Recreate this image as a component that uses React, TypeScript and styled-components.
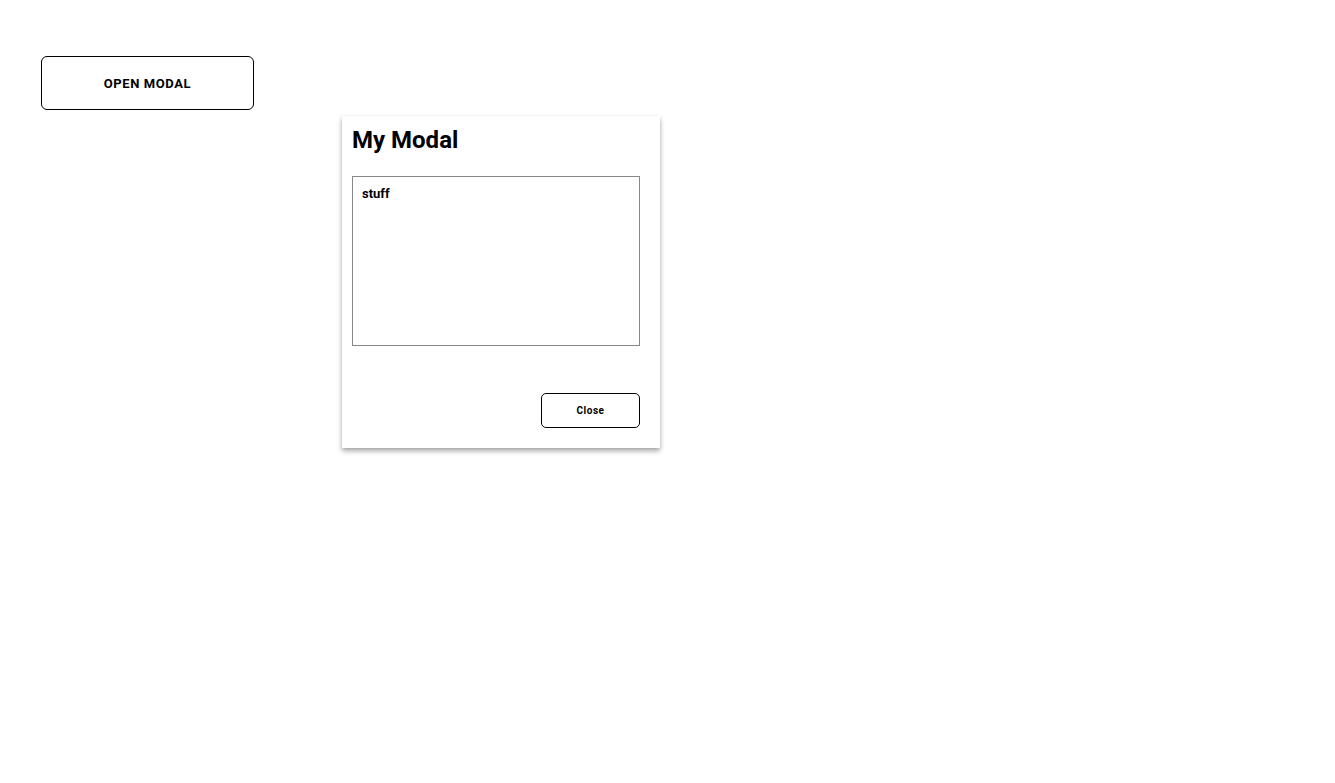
import React from "react";
import styled, { createGlobalStyle } from "styled-components";

const Global = createGlobalStyle`
  html, body { margin: 0; padding: 0; background: #ffffff; }
  body { font-family: Roboto, "Liberation Sans", sans-serif; color: #000; }
  * { box-sizing: border-box; }
`;

const Page = styled.div`
  position: relative;
  width: 1335px;
  height: 783px;
  padding: 56px 0 0 41px;
`;

const OpenButton = styled.button`
  display: flex;
  align-items: center;
  justify-content: center;
  width: 213px;
  height: 54px;
  background: #fff;
  border: 1px solid #000;
  border-radius: 6px;
  font-family: Roboto, "Liberation Sans", sans-serif;
  font-weight: 700;
  font-size: 13px;
  letter-spacing: 0.6px;
  color: #000;
  text-transform: uppercase;
  padding: 0;
  cursor: pointer;
`;

const Modal = styled.div`
  position: absolute;
  left: 342px;
  top: 116px;
  width: 318px;
  height: 332px;
  background: #fff;
  box-shadow: 0 3px 5px rgba(0, 0, 0, 0.35), 0 0 2px rgba(0, 0, 0, 0.06);
  padding: 10px 20px 20px 10px;
  display: flex;
  flex-direction: column;
`;

const Title = styled.h2`
  margin: 0 0 22px 0;
  font-size: 24px;
  line-height: 28px;
  font-weight: 700;
`;

const Content = styled.div`
  height: 170px;
  border: 1px solid #888;
  padding: 9px 9px;
  font-size: 13px;
  font-weight: 700;
  line-height: 15px;
`;

const Footer = styled.div`
  margin-top: auto;
  display: flex;
  justify-content: flex-end;
`;

const CloseButton = styled.button`
  width: 99px;
  height: 35px;
  background: #fff;
  border: 1px solid #000;
  border-radius: 5px;
  font-family: Roboto, "Liberation Sans", sans-serif;
  font-weight: 700;
  font-size: 10px;
  letter-spacing: 0.5px;
  color: #000;
  padding: 0;
  cursor: pointer;
`;

export default function App() {
  return (
    <>
      <Global />
      <Page>
        <OpenButton>Open Modal</OpenButton>
        <Modal>
          <Title>My Modal</Title>
          <Content>stuff</Content>
          <Footer>
            <CloseButton>Close</CloseButton>
          </Footer>
        </Modal>
      </Page>
    </>
  );
}
